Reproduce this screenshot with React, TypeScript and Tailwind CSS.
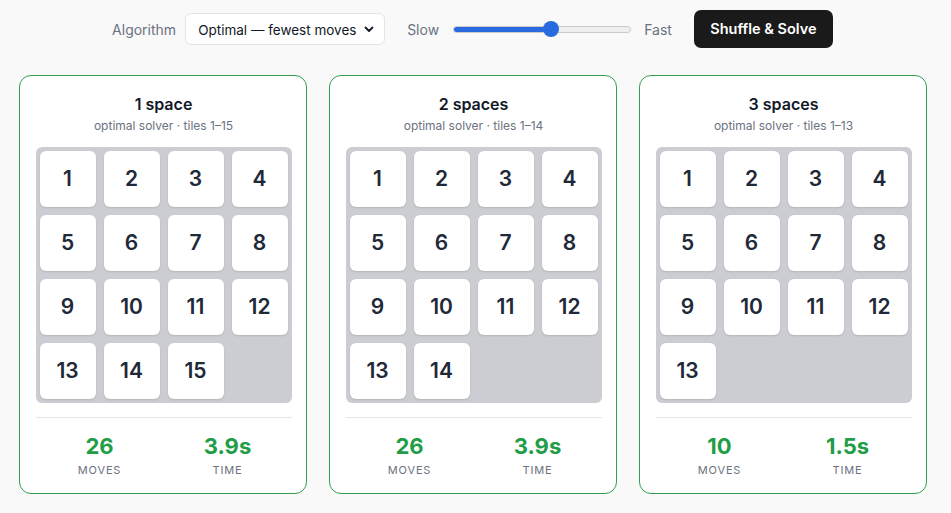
import React from 'react';

type Board = {
  title: string;
  subtitle: string;
  tiles: number;
  moves: number;
  time: string;
};

const boards: Board[] = [
  { title: '1 space', subtitle: 'optimal solver · tiles 1–15', tiles: 15, moves: 26, time: '3.9s' },
  { title: '2 spaces', subtitle: 'optimal solver · tiles 1–14', tiles: 14, moves: 26, time: '3.9s' },
  { title: '3 spaces', subtitle: 'optimal solver · tiles 1–13', tiles: 13, moves: 10, time: '1.5s' },
];

const App = () => {
  return (
    <div
      className="min-h-screen w-full bg-[#f9f9f9] pr-[6px] text-[#111827]"
      style={{ fontFamily: 'Inter, "Liberation Sans", sans-serif' }}>
      <Toolbar />
      <div className="mt-[27px] flex justify-center gap-[22px]">
        {boards.map((board) => (
          <PuzzleCard key={board.title} board={board} />
        ))}
      </div>
    </div>
  );
};

export default App;

const Toolbar = () => {
  return (
    <div className="flex items-center justify-center whitespace-nowrap pt-[10px]">
      <div className="flex items-center gap-[9px]">
        <span className="text-[14px] text-[#6b7280]">Algorithm</span>
        <div className="flex h-[32px] w-[200px] items-center justify-between rounded-[6px] border border-[#e2e4e8] bg-white pl-[12px] pr-[10px] text-[13.5px] leading-[20px] text-[#111827]">
          <span className="pt-[1px]">Optimal — fewest moves</span>
          <svg width="10" height="7" viewBox="0 0 10 7" fill="none">
            <path d="M1.5 1.5L5 5L8.5 1.5" stroke="#111827" strokeWidth="1.8" strokeLinecap="round" strokeLinejoin="round" />
          </svg>
        </div>
      </div>

      <div className="ml-[22px] flex items-center">
        <span className="text-[14px] text-[#6b7280]">Slow</span>
        <div className="relative ml-[14px] flex h-[16px] w-[178px] items-center">
          <div className="flex h-[7px] w-full overflow-hidden rounded-full border border-[#c8cace] bg-[#efefef]">
            <div className="h-full w-[98px] bg-[#2a6ae0]" />
          </div>
          <div className="absolute left-[90px] top-0 h-[16px] w-[16px] rounded-full bg-[#2a6ae0]" />
        </div>
        <span className="ml-[13px] text-[14px] text-[#6b7280]">Fast</span>
      </div>

      <button className="ml-[22px] h-[38px] w-[139px] rounded-[7px] bg-[#1a1a1a] text-[14.5px] font-semibold text-white">
        Shuffle &amp; Solve
      </button>
    </div>
  );
};

const PuzzleCard = ({ board }: { board: Board }) => {
  const cells = Array.from({ length: 16 }, (_, i) => (i < board.tiles ? i + 1 : null));

  return (
    <div className="w-[288px] rounded-[12px] border border-[#2f9e4f] bg-white pb-[15px] pl-[16px] pr-[14px] pt-[16px]">
      <h2 className="text-center text-[16px] font-semibold leading-[24px] text-[#111827]">{board.title}</h2>
      <p className="mt-[2px] text-center text-[12px] leading-[16px] text-[#6b7280]">{board.subtitle}</p>

      <div className="mt-[13px] grid w-[256px] grid-cols-4 gap-[8px] rounded-[6px] bg-[#cbcdd2] p-[4px]">
        {cells.map((n, i) =>
          n ? (
            <div
              key={i}
              className="flex h-[56px] w-[56px] items-center justify-center rounded-[6px] bg-white text-[21px] font-semibold text-[#1f2937] shadow-[0_1px_2px_rgba(0,0,0,0.12)]">
              {n}
            </div>
          ) : (
            <div key={i} className="h-[56px] w-[56px]" />
          )
        )}
      </div>

      <div className="mt-[14px] grid grid-cols-2 border-t border-[#e5e7eb] pt-[14px]">
        <Stat value={String(board.moves)} label="Moves" />
        <Stat value={board.time} label="Time" />
      </div>
    </div>
  );
};

const Stat = ({ value, label }: { value: string; label: string }) => {
  return (
    <div className="flex flex-col items-center">
      <span className="text-[22px] font-bold leading-[28px] text-[#1f9d47]">{value}</span>
      <span className="mt-[2px] text-[11px] uppercase leading-[16px] tracking-[0.08em] text-[#6b7280]">{label}</span>
    </div>
  );
};
